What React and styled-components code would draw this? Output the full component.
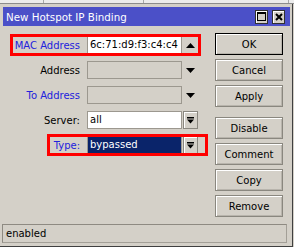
import React from "react";
import styled, { createGlobalStyle } from "styled-components";

const GlobalStyle = createGlobalStyle`
  html, body {
    margin: 0;
    padding: 0;
    background: #d4d0c8;
  }
  body {
    width: 294px;
    height: 247px;
    overflow: hidden;
    font-family: "DejaVu Sans", "Liberation Sans", sans-serif;
    font-size: 10px;
    color: #000;
  }
  * {
    box-sizing: border-box;
  }
`;

const TopStrip = styled.div`
  display: flex;
  height: 4px;
  background: #ececec;
  border-bottom: 1px solid #8c8c8c;
`;
const StripCell = styled.div`
  width: ${(p) => p.$w}px;
  border-right: 1px solid #a8a8a8;
`;

const Window = styled.div`
  display: flex;
  flex-direction: column;
  width: 293px;
  height: 243px;
  padding: 3px 2px 0 3px;
  background: #d4d0c8;
  border-right: 1px solid #404040;
  border-bottom: 1px solid #404040;
`;

const TitleBar = styled.div`
  display: flex;
  align-items: center;
  height: 19px;
  padding: 0 5px 0 3px;
  background: #4b50c8;
  color: #fff;
  font-size: 10.3px;
`;
const TitleText = styled.span`
  flex: 1;
  white-space: nowrap;
`;
const TitleButtons = styled.div`
  display: flex;
  gap: 4px;
`;
const TitleButton = styled.div`
  display: flex;
  align-items: center;
  justify-content: center;
  width: 13px;
  height: 14px;
  background: #d4d0c8;
  border: 1px solid #303030;
  box-shadow: inset 1px 1px #ffffff;
`;

const Body = styled.div`
  display: flex;
  flex: 1;
`;

const Form = styled.div`
  display: flex;
  flex-direction: column;
  gap: 7px;
  padding-top: 10px;
`;

const Row = styled.div`
  position: relative;
  display: grid;
  grid-template-columns: 84px 95px 16px;
  align-items: center;
  height: 18px;

  &::after {
    content: "";
    display: ${(p) => (p.$hl ? "block" : "none")};
    position: absolute;
    top: -2px;
    bottom: -2px;
    left: ${(p) => (p.$hl ? p.$hl[0] : 0)}px;
    width: ${(p) => (p.$hl ? p.$hl[1] - p.$hl[0] : 0)}px;
    border: 3px solid #ff0000;
    pointer-events: none;
  }
`;

const Label = styled.label`
  justify-self: end;
  margin-right: 7px;
  white-space: nowrap;
  color: ${(p) => (p.$blue ? "#2222dd" : "#000")};
`;

const Field = styled.div`
  height: 18px;
  padding-left: 2px;
  line-height: 16px;
  white-space: nowrap;
  overflow: hidden;
  border: 1px solid #9c988f;
  background: ${(p) =>
    p.$kind === "selected" ? "#0a246a" : p.$kind === "disabled" ? "#d4d0c8" : "#ffffff"};
  color: ${(p) => (p.$kind === "selected" ? "#ffffff" : "#000")};
`;

const ArrowCell = styled.div`
  display: flex;
  justify-content: center;
  padding-left: 1px;
`;

const DropButton = styled.div`
  display: flex;
  align-items: center;
  justify-content: center;
  width: 15px;
  height: 18px;
  margin-left: 1px;
  background: #d4d0c8;
  border: 1px solid #8a877f;
  box-shadow: inset 1px 1px #ffffff;
`;

const Buttons = styled.div`
  display: flex;
  flex-direction: column;
  gap: 4px;
  margin-left: auto;
  padding: 7px 7px 0 0;
`;

const Button = styled.div`
  display: flex;
  align-items: center;
  justify-content: center;
  width: 68px;
  height: 22px;
  margin-top: ${(p) => (p.$sep ? 6 : 0)}px;
  background: #d4d0c8;
  border: 1px solid ${(p) => (p.$default ? "#000" : "#8a877f")};
  box-shadow: inset 1px 1px #ffffff, inset -1px -1px #b8b4ac;
`;

const StatusBar = styled.div`
  height: 19px;
  margin: 0 3px 3px -1px;
  padding-left: 3px;
  line-height: 17px;
  border: 1px solid #a39f97;
  border-top-color: #8e8a82;
  border-left-color: #8e8a82;
`;

const TriUp = () => (
  <svg width="9" height="5" viewBox="0 0 9 5">
    <path d="M0 5 L4.5 0 L9 5 Z" fill="#000" />
  </svg>
);
const TriDown = () => (
  <svg width="9" height="5" viewBox="0 0 9 5">
    <path d="M0 0 L9 0 L4.5 5 Z" fill="#000" />
  </svg>
);
const DropIcon = () => (
  <svg width="7" height="7" viewBox="0 0 7 7">
    <rect x="0" y="0" width="7" height="1.5" fill="#000" />
    <path d="M0 2.5 L7 2.5 L3.5 6.5 Z" fill="#000" />
  </svg>
);

const MaxIcon = () => (
  <svg width="9" height="9" viewBox="0 0 9 9">
    <rect x="0.5" y="0.5" width="8" height="8" fill="none" stroke="#000" />
    <rect x="0" y="0" width="9" height="2" fill="#000" />
  </svg>
);
const CloseIcon = () => (
  <svg width="8" height="8" viewBox="0 0 8 8">
    <path d="M1 1 L7 7 M7 1 L1 7" stroke="#000" strokeWidth="2" />
  </svg>
);

export default function App() {
  return (
    <>
      <GlobalStyle />
      <TopStrip>
        <StripCell $w={44} />
        <StripCell $w={100} />
        <StripCell $w={145} />
      </TopStrip>
      <Window>
        <TitleBar>
          <TitleText>New Hotspot IP Binding</TitleText>
          <TitleButtons>
            <TitleButton>
              <MaxIcon />
            </TitleButton>
            <TitleButton>
              <CloseIcon />
            </TitleButton>
          </TitleButtons>
        </TitleBar>
        <Body>
          <Form>
            <Row $hl={[7, 192]}>
              <Label $blue>MAC Address</Label>
              <Field>6c:71:d9:f3:c4:c4</Field>
              <ArrowCell>
                <TriUp />
              </ArrowCell>
            </Row>
            <Row>
              <Label>Address</Label>
              <Field $kind="disabled" />
              <ArrowCell>
                <TriDown />
              </ArrowCell>
            </Row>
            <Row>
              <Label $blue>To Address</Label>
              <Field $kind="disabled" />
              <ArrowCell>
                <TriDown />
              </ArrowCell>
            </Row>
            <Row>
              <Label>Server:</Label>
              <Field>all</Field>
              <DropButton>
                <DropIcon />
              </DropButton>
            </Row>
            <Row $hl={[44, 199]}>
              <Label $blue>Type:</Label>
              <Field $kind="selected">bypassed</Field>
              <DropButton>
                <DropIcon />
              </DropButton>
            </Row>
          </Form>
          <Buttons>
            <Button $default>OK</Button>
            <Button>Cancel</Button>
            <Button>Apply</Button>
            <Button $sep>Disable</Button>
            <Button>Comment</Button>
            <Button>Copy</Button>
            <Button>Remove</Button>
          </Buttons>
        </Body>
        <StatusBar>enabled</StatusBar>
      </Window>
    </>
  );
}
